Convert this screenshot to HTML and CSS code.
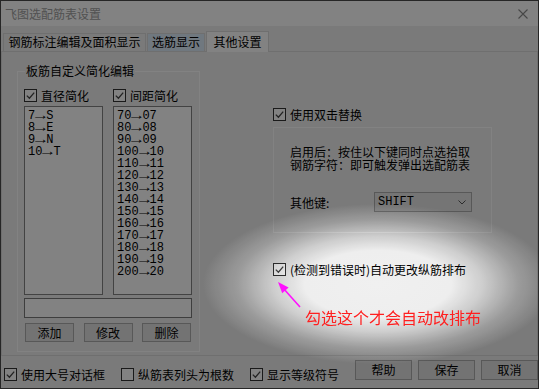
FILE: index.html
```html
<!DOCTYPE html>
<html lang="zh-CN">
<head>
  <meta charset="UTF-8" />
  <meta name="viewport" content="width=device-width, initial-scale=1.0" />
  <title>飞图选配筋表设置</title>
  <link rel="stylesheet" href="styles.css">
</head>
<body>
  <div class="window">
    <div class="titlebar">
      <span class="title">飞图选配筋表设置</span>
      <svg class="close" width="10" height="10" viewBox="0 0 10 10"><path d="M0.5 0.5L9.5 9.5M9.5 0.5L0.5 9.5" stroke="#8a8a8a" stroke-width="1.1" fill="none"/></svg>
    </div>

    <div class="tabs">
      <div class="tab tab-wide">钢筋标注编辑及面积显示</div>
      <div class="tab tab-hover">选筋显示</div>
      <div class="tab tab-active">其他设置</div>
    </div>

    <div class="panel">
      <div class="group group-left">
        <div class="group-title">板筋自定义简化编辑</div>
        <div class="cols">
          <div class="col">
            <label class="check"><span class="box"><svg viewBox="0 0 11 11"><polyline points="1.8,5.6 4.4,8.2 9.2,2.6"/></svg></span>直径简化</label>
            <div class="list">
              <div>7<span class="arr">→</span>S</div>
              <div>8<span class="arr">→</span>E</div>
              <div>9<span class="arr">→</span>N</div>
              <div>10<span class="arr">→</span>T</div>
            </div>
          </div>
          <div class="col">
            <label class="check"><span class="box"><svg viewBox="0 0 11 11"><polyline points="1.8,5.6 4.4,8.2 9.2,2.6"/></svg></span>间距简化</label>
            <div class="list">
              <div>70<span class="arr">→</span>07</div>
              <div>80<span class="arr">→</span>08</div>
              <div>90<span class="arr">→</span>09</div>
              <div>100<span class="arr">→</span>10</div>
              <div>110<span class="arr">→</span>11</div>
              <div>120<span class="arr">→</span>12</div>
              <div>130<span class="arr">→</span>13</div>
              <div>140<span class="arr">→</span>14</div>
              <div>150<span class="arr">→</span>15</div>
              <div>160<span class="arr">→</span>16</div>
              <div>170<span class="arr">→</span>17</div>
              <div>180<span class="arr">→</span>18</div>
              <div>190<span class="arr">→</span>19</div>
              <div>200<span class="arr">→</span>20</div>
            </div>
          </div>
        </div>
        <div class="textbox"></div>
        <div class="btn-row">
          <button class="btn btn-small">添加</button>
          <button class="btn btn-small">修改</button>
          <button class="btn btn-small">删除</button>
        </div>
      </div>

      <div class="side">
        <label class="check"><span class="box"><svg viewBox="0 0 11 11"><polyline points="1.8,5.6 4.4,8.2 9.2,2.6"/></svg></span>使用双击替换</label>
        <div class="group group-right">
          <p class="hint">启用后：按住以下键同时点选拾取<br>钢筋字符：即可触发弹出选配筋表</p>
          <div class="key-row">
            <span class="key-label">其他键:</span>
            <div class="select">
              <span>SHIFT</span>
              <svg width="8" height="5" viewBox="0 0 8 5"><polyline points="0.5,0.5 4,4 7.5,0.5"/></svg>
            </div>
          </div>
        </div>
        <label class="check check-auto"><span class="box"><svg viewBox="0 0 11 11"><polyline points="1.8,5.6 4.4,8.2 9.2,2.6"/></svg></span>(检测到错误时)自动更改纵筋排布</label>
        <div class="note">勾选这个才会自动改排布</div>
      </div>
    </div>

    <div class="footer">
      <label class="check foot-check"><span class="box"><svg viewBox="0 0 11 11"><polyline points="1.8,5.6 4.4,8.2 9.2,2.6"/></svg></span>使用大号对话框</label>
      <label class="check foot-check"><span class="box"></span>纵筋表列头为根数</label>
      <label class="check foot-check"><span class="box"><svg viewBox="0 0 11 11"><polyline points="1.8,5.6 4.4,8.2 9.2,2.6"/></svg></span>显示等级符号</label>
      <div class="foot-btns">
        <button class="btn btn-big">帮助</button>
        <button class="btn btn-big">保存</button>
        <button class="btn btn-big">取消</button>
      </div>
    </div>

    <svg class="pointer" width="36" height="36" viewBox="0 0 36 36">
      <line x1="30" y1="31" x2="13" y2="12" stroke="#ff10ff" stroke-width="1.6"/>
      <polygon points="8,6 18.6,11.4 12.2,17.2" fill="#ff10ff"/>
    </svg>
  </div>

  <div class="spotlight"></div>
</body>
</html>
```

FILE: styles.css
```css
body {
  margin: 0;
  background-color: #fff;
  font-family: "Noto Sans CJK SC", sans-serif;
  font-size: 12px;
  color: #000;
}
.window {
  position: relative;
  width: 539px;
  height: 389px;
  box-sizing: border-box;
  border: 1px solid #4a4a4a;
  background-color: #f0f0f0;
  display: flex;
  flex-direction: column;
}

/* title */
.titlebar {
  height: 25px;
  flex: none;
  background-color: #fff;
  display: flex;
  align-items: center;
  padding-left: 4px;
}
.title {
  color: #a0a0a0;
  line-height: 14px;
}
.close {
  margin-left: auto;
  margin-right: 10px;
}

/* tabs */
.tabs {
  height: 25px;
  flex: none;
  display: flex;
  align-items: flex-end;
  padding-left: 2px;
}
.tab {
  box-sizing: border-box;
  height: 18px;
  margin-right: 1px;
  border: 1px solid #d9d9d9;
  border-bottom: none;
  background-color: #f0f0f0;
  text-align: center;
  line-height: 16px;
}
.tab-wide {
  width: 143px;
}
.tab-hover {
  width: 58px;
  background-color: #dcebfa;
}
.tab-active {
  position: relative;
  width: 63px;
  height: 21px;
  margin-bottom: -1px;
  background-color: #fff;
  line-height: 19px;
}

/* main panel */
.panel {
  height: 305px;
  flex: none;
  box-sizing: border-box;
  border: 1px solid #d9d9d9;
  display: flex;
  align-items: flex-start;
}
.group {
  position: relative;
  box-sizing: border-box;
  border: 1px solid #fff;
}
.group-title {
  position: absolute;
  top: -8px;
  left: 7px;
  padding: 0 1px;
  background-color: #f0f0f0;
  line-height: 14px;
}
.group-left {
  width: 183px;
  height: 281px;
  margin: 19px 0 0 15px;
  padding: 16px 0 0 6px;
}
.cols {
  display: flex;
  gap: 10px;
}
.col {
  width: 79px;
}
.check {
  display: flex;
  align-items: center;
  height: 15px;
  gap: 4px;
  white-space: nowrap;
  line-height: 14px;
}
.box {
  box-sizing: border-box;
  width: 13px;
  height: 13px;
  border: 1px solid #333;
  background-color: #fff;
  display: flex;
  align-items: center;
  justify-content: center;
}
.box svg {
  width: 11px;
  height: 11px;
  fill: none;
  stroke: #444;
  stroke-width: 1.3;
}
.list {
  box-sizing: border-box;
  height: 189px;
  margin-top: 3px;
  padding: 3px 0 0 3px;
  border: 1px solid #828282;
  background-color: #fff;
  font-family: "Liberation Mono", monospace;
  font-size: 12px;
}
.list div {
  height: 12px;
  line-height: 12px;
  white-space: nowrap;
}
.arr {
  display: inline-block;
  width: 11px;
  text-align: center;
  transform: scaleX(1.5);
}
.textbox {
  box-sizing: border-box;
  width: 168px;
  height: 20px;
  margin-top: 3px;
  border: 1px solid #7a7a7a;
  background-color: #fff;
}
.btn-row {
  display: flex;
  justify-content: space-between;
  width: 166px;
  margin: 5px 0 0 1px;
}
.btn {
  box-sizing: border-box;
  padding: 0;
  border: 1px solid #adadad;
  background-color: #e1e1e1;
  font-family: "Noto Sans CJK SC", sans-serif;
  font-size: 12px;
  color: #000;
  line-height: 14px;
}
.btn-small {
  width: 49px;
  height: 19px;
}
.btn-big {
  width: 57px;
  height: 20px;
}

/* right side */
.side {
  margin: 55px 0 0 73px;
}
.group-right {
  width: 219px;
  height: 106px;
  margin-top: 5px;
  padding: 17px 0 0 16px;
}
.hint {
  margin: 0;
  line-height: 13px;
}
.key-row {
  display: flex;
  align-items: center;
  margin-top: 21px;
}
.key-label {
  width: 84px;
}
.select {
  box-sizing: border-box;
  width: 98px;
  height: 20px;
  padding: 0 5px 0 3px;
  border: 1px solid #acacac;
  background-color: #e5e5e5;
  display: flex;
  align-items: center;
  justify-content: space-between;
  font-family: "Liberation Mono", monospace;
}
.select svg {
  fill: none;
  stroke: #555;
  stroke-width: 1;
}
.check-auto {
  margin-top: 29px;
}
.note {
  position: relative;
  z-index: 2;
  margin: 30px 0 0 32px;
  color: #ff1f1f;
  font-size: 16px;
  line-height: 20px;
  white-space: nowrap;
}
.pointer {
  position: absolute;
  left: 269px;
  top: 275px;
  z-index: 2;
}

/* footer */
.footer {
  flex: 1;
  display: flex;
  align-items: flex-start;
  padding: 0 5px 0 3px;
}
.foot-check {
  margin: 11px 16px 0 0;
}
.foot-btns {
  display: flex;
  gap: 6px;
  margin: 4px 0 0 auto;
}

/* dimmed screen with a light spot */
.spotlight {
  position: fixed;
  inset: 0;
  z-index: 1;
  pointer-events: none;
  mix-blend-mode: multiply;
  background: radial-gradient(ellipse 175px 80px at 378px 284px, #fff 0%, #fdfdfd 42%, #dadada 60%, #a6a6a6 80%, #828282 100%);
}
```
